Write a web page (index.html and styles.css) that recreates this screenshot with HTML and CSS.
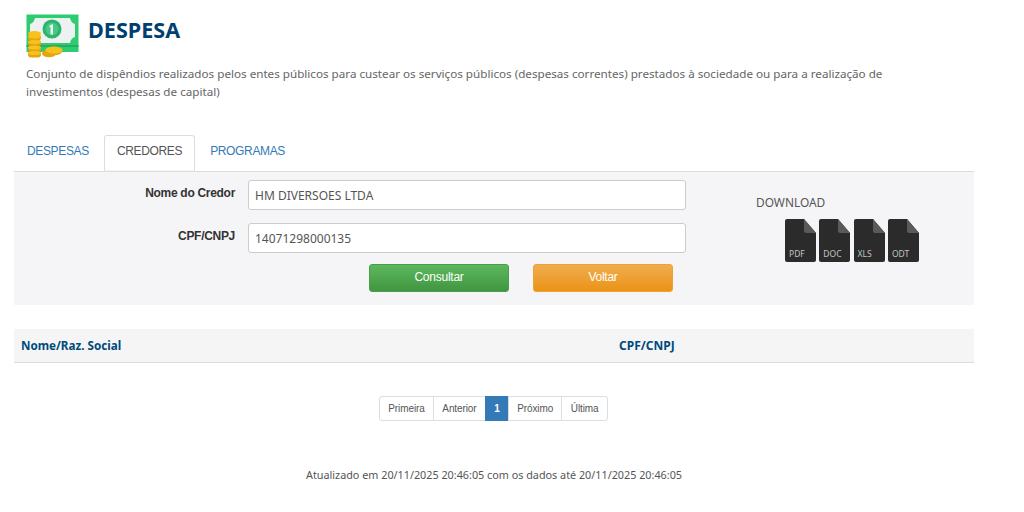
FILE: index.html
```html
<!DOCTYPE html>
<html lang="pt-BR">
<head>
<meta charset="utf-8">
<title>Despesa</title>
<link rel="stylesheet" href="styles.css">
</head>
<body>
<main class="page">
  <header class="intro">
    <div class="title-row">
      <svg class="logo" width="54" height="44" viewBox="0 0 54 44">
        <rect x="0.5" y="0.500" width="52" height="37.500" fill="#2ecc71"/>
        <rect x="0.5" y="31" width="52" height="2" fill="#27ae60"/>
        <path d="M9 4H44Q45 9 49 10V23Q45 24 44 29H9Q8 24 4 23V10Q8 9 9 4Z" fill="#edf1f2"/>
        <circle cx="26" cy="15" r="9.500" fill="#2cb56a"/>
        <circle cx="26" cy="15" r="6.500" fill="#45c985"/>
        <path d="M23.500 11.500l3.500-1.500V20.500h-2.500v-7.500l-1 .5z" fill="#edf1f2"/>
        <g fill="#e8a30f">
          <rect x="2" y="37" width="13" height="6.500" rx="3.200"/>
          <rect x="2" y="31.500" width="13" height="6" rx="3"/>
          <rect x="2" y="26" width="13" height="6" rx="3"/>
          <rect x="2" y="20.500" width="13" height="6" rx="3"/>
        </g>
        <g fill="#f6c21c">
          <ellipse cx="8.500" cy="39" rx="6.500" ry="2"/>
          <ellipse cx="8.500" cy="33.500" rx="6.500" ry="2"/>
          <ellipse cx="8.500" cy="28" rx="6.500" ry="2"/>
          <ellipse cx="8.500" cy="22.500" rx="6.500" ry="2"/>
          <ellipse cx="8.500" cy="19.500" rx="6.500" ry="2.500"/>
        </g>
        <ellipse cx="23" cy="39.500" rx="7" ry="3.800" fill="#e8a30f"/>
        <ellipse cx="28" cy="37" rx="8.500" ry="4.200" fill="#e8a30f"/>
        <ellipse cx="28" cy="36" rx="8.500" ry="3.400" fill="#f6c21c"/>
      </svg>
      <h1 class="title">DESPESA</h1>
    </div>
    <p class="lead">Conjunto de dispêndios realizados pelos entes públicos para custear os serviços públicos (despesas correntes) prestados à sociedade ou para a realização de investimentos (despesas de capital)</p>
  </header>

  <nav class="tabs">
    <a class="tab">DESPESAS</a>
    <a class="tab tab-active">CREDORES</a>
    <a class="tab">PROGRAMAS</a>
  </nav>

  <section class="panel">
    <form class="search">
      <div class="field">
        <label class="field-label">Nome do Credor</label>
        <div class="input">HM DIVERSOES LTDA</div>
      </div>
      <div class="field field-last">
        <label class="field-label">CPF/CNPJ</label>
        <div class="input">14071298000135</div>
      </div>
      <div class="actions">
        <button type="button" class="btn btn-green">Consultar</button>
        <button type="button" class="btn btn-orange">Voltar</button>
      </div>
    </form>
    <aside class="download">
      <div class="download-title">DOWNLOAD</div>
      <div class="files">
        <div class="file"><svg class="file-shape" width="31" height="43" viewBox="0 0 31 43"><path d="M2 0H19L31 14V41a2 2 0 0 1-2 2H2a2 2 0 0 1-2-2V2a2 2 0 0 1 2-2Z" fill="#2b2b2b"/><path d="M19 0L31 14H21a2 2 0 0 1-2-2Z" fill="#5a5a5a"/></svg><span class="file-ext">PDF</span></div>
        <div class="file"><svg class="file-shape" width="31" height="43" viewBox="0 0 31 43"><path d="M2 0H19L31 14V41a2 2 0 0 1-2 2H2a2 2 0 0 1-2-2V2a2 2 0 0 1 2-2Z" fill="#2b2b2b"/><path d="M19 0L31 14H21a2 2 0 0 1-2-2Z" fill="#5a5a5a"/></svg><span class="file-ext">DOC</span></div>
        <div class="file"><svg class="file-shape" width="31" height="43" viewBox="0 0 31 43"><path d="M2 0H19L31 14V41a2 2 0 0 1-2 2H2a2 2 0 0 1-2-2V2a2 2 0 0 1 2-2Z" fill="#2b2b2b"/><path d="M19 0L31 14H21a2 2 0 0 1-2-2Z" fill="#5a5a5a"/></svg><span class="file-ext">XLS</span></div>
        <div class="file"><svg class="file-shape" width="31" height="43" viewBox="0 0 31 43"><path d="M2 0H19L31 14V41a2 2 0 0 1-2 2H2a2 2 0 0 1-2-2V2a2 2 0 0 1 2-2Z" fill="#2b2b2b"/><path d="M19 0L31 14H21a2 2 0 0 1-2-2Z" fill="#5a5a5a"/></svg><span class="file-ext">ODT</span></div>
      </div>
    </aside>
  </section>

  <div class="table-head">
    <div class="col-name">Nome/Raz. Social</div>
    <div class="col-doc">CPF/CNPJ</div>
  </div>

  <nav class="pager-wrap">
    <ul class="pager">
      <li class="page-item">Primeira</li>
      <li class="page-item">Anterior</li>
      <li class="page-item page-current">1</li>
      <li class="page-item">Próximo</li>
      <li class="page-item">Última</li>
    </ul>
  </nav>

  <p class="updated">Atualizado em 20/11/2025 20:46:05 com os dados até 20/11/2025 20:46:05</p>
</main>
</body>
</html>
```

FILE: styles.css
```css
* { box-sizing: border-box; }
html, body { margin: 0; padding: 0; background: #fff; }
body { font-family: "Noto Sans", sans-serif; color: #555; height: 512px; overflow: hidden; }
.page { width: 960px; margin-left: 14px; }

.intro { padding: 14px 0 0 12px; height: 135px; }
.title-row { display: flex; align-items: flex-start; gap: 8px; height: 48px; }
.logo { flex: none; }
.title { margin: 4px 0 0 0; font-size: 21.600px; line-height: 24px; font-weight: 700; color: #004070; }
.lead { margin: 2.500px 0 0 0; font-size: 11.670px; line-height: 18px; color: #666; width: 870px; }

.tabs { display: flex; height: 36px; }
.tab { font-family: "Liberation Sans", sans-serif; font-size: 12px; letter-spacing: -0.350px; padding: 0 12px; line-height: 30px; color: #337ab7; margin-right: 2px; height: 36px; border: 1px solid transparent; }
.tab-active { color: #555; background: #fff; border: 1px solid #ddd; border-bottom-color: #f5f5f8; border-radius: 3px 3px 0 0; position: relative; z-index: 1; }

.panel { display: flex; background: #f5f5f8; border-top: 1px solid #ddd; height: 134px; }
.search { width: 672px; padding-top: 8px; }
.field { display: flex; height: 30px; margin-bottom: 13px; }
.field-last { margin-bottom: 11px; }
.field-label { width: 221px; text-align: right; font-family: "Liberation Sans", sans-serif; font-weight: 700; font-size: 12px; letter-spacing: -0.300px; line-height: 26px; color: #333; }
.input { margin-left: 13px; width: 438px; height: 30px; background: #fff; border: 1px solid #ccc; border-radius: 3px; padding: 0 6px; font-size: 12px; line-height: 29px; color: #555; }
.actions { display: flex; gap: 24px; margin-left: 355px; }
.btn { width: 140px; height: 28px; border-radius: 3px; border: 1px solid #ccc; color: #fff; font-family: "Liberation Sans", sans-serif; font-size: 12px; letter-spacing: -0.250px; padding: 0 0 2px; }
.btn-green { background: linear-gradient(#5cb85c, #419641); border-color: #4a9e4a; }
.btn-orange { background: linear-gradient(#f0ad4e, #eb9316); border-color: #eea236; }

.download { padding: 23px 0 0 70px; flex: 1; }
.download-title { font-size: 11.900px; line-height: 14px; color: #555; }
.files { display: flex; gap: 3.300px; margin: 10px 0 0 29px; }
.file { position: relative; width: 31px; height: 43px; }
.file-shape { display: block; }
.file-ext { position: absolute; left: 4px; bottom: 3px; font-size: 8.500px; line-height: 10px; color: #c4c4c4; }

.table-head { display: flex; margin-top: 24px; height: 34px; background: #f5f5f5; border-bottom: 1px solid #ddd; font-size: 12px; line-height: 34px; font-weight: 700; color: #004a7c; }
.col-name { width: 605px; padding-left: 7px; font-size: 11.650px; }
.col-doc { flex: 1; }

.pager-wrap { display: flex; margin-top: 33px; padding-left: 365px; }
.pager { display: flex; list-style: none; margin: 0; padding: 0; font-family: "Liberation Sans", sans-serif; font-size: 10px; letter-spacing: -0.100px; }
.page-item { height: 25px; line-height: 23px; padding: 0 8.300px; background: #fff; border: 1px solid #ddd; margin-left: -1px; color: #555; }
.page-item:first-child { border-radius: 3px 0 0 3px; margin-left: 0; }
.page-item:last-child { border-radius: 0 3px 3px 0; }
.page-current { background: #337ab7; border-color: #337ab7; color: #fff; font-weight: 700; }

.updated { margin: 46px 0 0 0; font-size: 10.800px; line-height: 16px; color: #555; padding-left: 292px; }
```
